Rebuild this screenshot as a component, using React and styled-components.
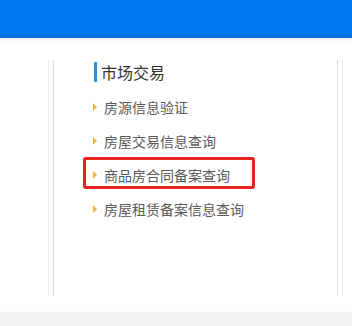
import React from "react";
import styled, { createGlobalStyle } from "styled-components";

const Global = createGlobalStyle`
  html, body { margin: 0; padding: 0; background: #fff; }
  body { font-family: "Microsoft YaHei", "Noto Sans CJK SC", "Noto Sans", sans-serif; }
`;

const Page = styled.div`
  width: 352px;
  height: 326px;
  display: flex;
  flex-direction: column;
  overflow: hidden;
`;

const Header = styled.header`
  height: 35px;
  background: #0078f4;
  border-bottom: 3px solid #0c6fdc;
  box-shadow: 0 2px 4px rgba(230, 180, 180, 0.25);
`;

const Main = styled.div`
  padding: 22px 9px 0 48px;
  flex: none;
`;

const Outer = styled.div`
  height: 236px;
  border-left: 1px solid #ececec;
  border-right: 1px solid #ececec;
  padding: 0 4px;
`;

const Inner = styled.div`
  height: 100%;
  border-left: 1px solid #dcdcdc;
  border-right: 1px solid #dcdcdc;
  padding: 2px 0 0 29px;
  box-sizing: border-box;
`;

const Heading = styled.h2`
  margin: 0 0 7px 11px;
  height: 20px;
  display: flex;
  align-items: center;
  gap: 4px;
  font-size: 16px;
  font-weight: normal;
  color: #333;
  line-height: 20px;
`;

const Bar = styled.span`
  width: 3px;
  height: 20px;
  background: #2b8ed6;
  border-radius: 1px;
`;

const List = styled.ul`
  list-style: none;
  margin: 0;
  padding: 0;
  display: flex;
  flex-direction: column;
  gap: 2px;
`;

const Item = styled.li`
  width: 172px;
  height: 32px;
  box-sizing: border-box;
  border: 3px solid ${(p) => (p.$highlight ? "#e8221e" : "transparent")};
  border-radius: 3px;
  padding: 4px 0 0 7px;
  display: flex;
  align-items: center;
  gap: 7px;
  font-size: 14px;
  color: #5a5a5a;
  white-space: nowrap;
`;

const Arrow = styled.span`
  width: 0;
  height: 0;
  border-left: 4px solid #f4b13c;
  border-top: 4px solid transparent;
  border-bottom: 4px solid transparent;
  flex: none;
`;

const Footer = styled.div`
  margin-top: auto;
  height: 14px;
  background: #f2f2f2;
  box-shadow: 0 -1px 2px rgba(0, 0, 0, 0.02);
`;

const items = [
  "房源信息验证",
  "房屋交易信息查询",
  "商品房合同备案查询",
  "房屋租赁备案信息查询",
];

export default function App() {
  return (
    <Page>
      <Global />
      <Header />
      <Main>
        <Outer>
          <Inner>
            <Heading>
              <Bar />
              市场交易
            </Heading>
            <List>
              {items.map((t, i) => (
                <Item key={t} $highlight={i === 2}>
                  <Arrow />
                  {t}
                </Item>
              ))}
            </List>
          </Inner>
        </Outer>
      </Main>
      <Footer />
    </Page>
  );
}
